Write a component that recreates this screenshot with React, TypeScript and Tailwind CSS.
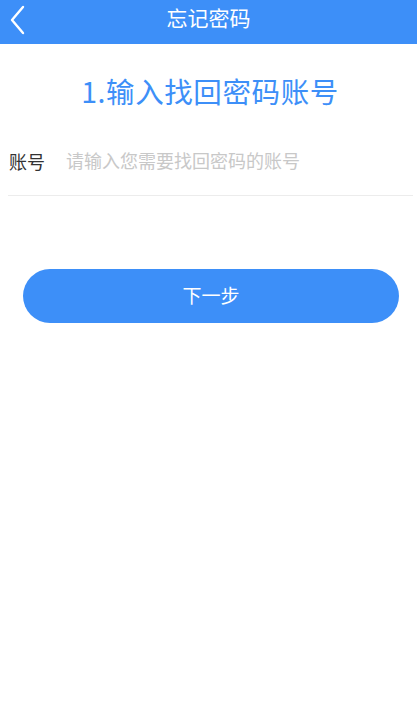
import React, { useState } from 'react';

const font = { fontFamily: '"Noto Sans CJK SC", "Noto Sans", sans-serif' };

export default function App() {
  const [account, setAccount] = useState('');

  return (
    <div className="min-h-screen bg-white" style={font}>
      {/* header */}
      <div className="relative h-[44px] bg-[#3d8ff8] flex items-center justify-center">
        <button className="absolute left-[6px] top-[3px] p-[2px]">
          <svg width="20" height="30" viewBox="0 0 20 30" fill="none">
            <path d="M15 2 L4 15 L15 28" stroke="white" strokeWidth="2.4" strokeLinecap="round" strokeLinejoin="round" />
          </svg>
        </button>
        <h1 className="text-[21px] text-white leading-none -mt-[10px]">忘记密码</h1>
      </div>

      <h2 className="mt-[33px] text-center text-[28.5px] leading-none text-[#3d8ff8] tracking-[0.6px] pl-[3px]">
        1.输入找回密码账号
      </h2>

      {/* account row */}
      <div className="mt-[40px] ml-[8px] mr-[4px] flex items-center h-[50px] border-b border-[#ececec]">
        <span className="text-[18px] text-[#333] leading-none pl-[1px] -mt-[19px]">账号</span>
        <input
          value={account}
          onChange={e => setAccount(e.target.value)}
          placeholder="请输入您需要找回密码的账号"
          className="ml-[21px] flex-1 text-[18px] text-[#333] placeholder:text-[#c8c8c8] outline-none bg-transparent -mt-[19px]"
        />
      </div>

      <div className="mt-[73px] px-[23px] pr-[18px]">
        <button className="w-full h-[54px] rounded-full bg-[#3d8ff8] text-white text-[19px]">
          下一步
        </button>
      </div>
    </div>
  );
}
